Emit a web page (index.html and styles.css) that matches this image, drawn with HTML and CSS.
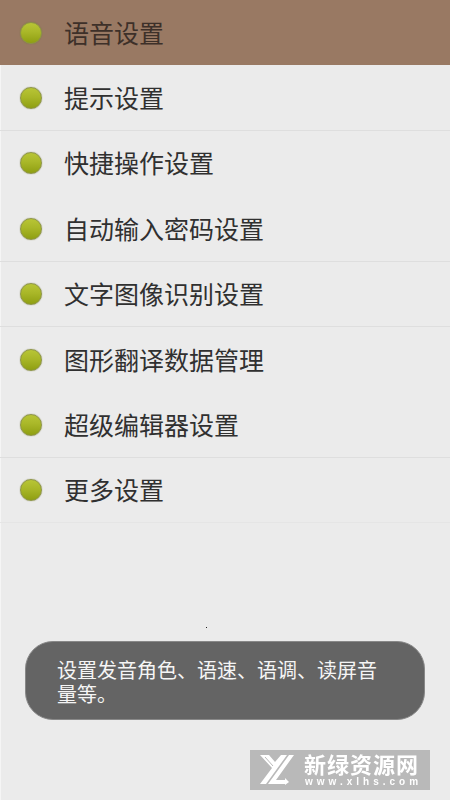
FILE: index.html
```html
<!DOCTYPE html>
<html lang="zh-CN">
<head>
<meta charset="utf-8">
<meta name="viewport" content="width=device-width, initial-scale=1">
<title>设置</title>
<link rel="stylesheet" href="styles.css">
</head>
<body>
<main class="screen">
  <ul class="menu">
    <li class="menu-row selected"><button type="button" class="item"><span class="dot"></span>语音设置</button></li>
    <li class="menu-row ruled"><button type="button" class="item"><span class="dot"></span>提示设置</button></li>
    <li class="menu-row"><button type="button" class="item"><span class="dot"></span>快捷操作设置</button></li>
    <li class="menu-row ruled"><button type="button" class="item"><span class="dot"></span>自动输入密码设置</button></li>
    <li class="menu-row ruled"><button type="button" class="item"><span class="dot"></span>文字图像识别设置</button></li>
    <li class="menu-row"><button type="button" class="item"><span class="dot"></span>图形翻译数据管理</button></li>
    <li class="menu-row ruled"><button type="button" class="item"><span class="dot"></span>超级编辑器设置</button></li>
    <li class="menu-row ruled faint"><button type="button" class="item"><span class="dot"></span>更多设置</button></li>
  </ul>
</main>
<span class="speck"></span>
<div class="toast" role="status">设置发音角色、语速、语调、读屏音量等。</div>
<div class="brand">
  <svg class="logo" viewBox="0 0 36 32" aria-hidden="true">
    <path fill="#fff" d="M0 1H9L15 8L21 1H27L6 30H0L12 14Z"/>
    <path fill="#fff" d="M29 1H34L16 26H25V24L29 28L25 31V30H8Z"/>
    <path fill="none" stroke="#b9b9b9" d="M5 3L13 12"/>
  </svg>
  <div class="brand-text">
    <span class="brand-name">新绿资源网</span>
    <span class="brand-url">www.xlhs.com</span>
  </div>
</div>
</body>
</html>
```
FILE: styles.css
```css
* {
  box-sizing: border-box;
}

body {
  margin: 0;
  min-height: 100vh;
  background: #ebebeb;
  color: #303030;
  font-family: "Noto Sans CJK SC", sans-serif;
}

.screen {
  min-height: 100vh;
  background: linear-gradient(90deg, #f5f5f5 1px, transparent 1px);
}

.menu {
  display: grid;
  grid-auto-rows: 1fr;
  min-height: 523px;
  margin: 0;
  padding: 0;
  list-style: none;
}

.menu-row {
  display: flex;
  border-bottom: 1px solid transparent;
}

.ruled {
  border-bottom-color: #dedede;
}

.faint {
  border-bottom-color: #e5e5e5;
}

.item {
  display: flex;
  align-items: center;
  gap: 22px;
  width: 100%;
  padding: 0 20px 1px;
  border: 0;
  background: none;
  color: inherit;
  font: inherit;
  font-size: 25px;
  line-height: 36px;
  text-align: left;
}

.selected {
  background: #997963;
  color: #3d3029;
}

.dot {
  flex: none;
  width: 22px;
  height: 22px;
  margin-top: 2px;
  border: 1px solid #8d9544;
  border-radius: 50%;
  background: linear-gradient(#b8c536, #a9b728 45%, #8f9f12);
  box-shadow: 0 0 1px #77773f;
}

.speck {
  position: fixed;
  left: 206px;
  bottom: 172px;
  width: 1px;
  height: 1px;
  background: #222;
}

.toast {
  position: fixed;
  right: 25px;
  bottom: 80px;
  left: 25px;
  padding: 16px 31px 13px;
  border: 1px solid #888;
  border-radius: 28px;
  background: #646464;
  color: #f5f5f5;
  font-size: 20px;
  line-height: 24px;
}

.brand {
  position: fixed;
  right: 20px;
  bottom: 10px;
  display: flex;
  align-items: center;
  gap: 8px;
  width: 180px;
  padding: 1px 10px;
  background: #b9b9b9;
  color: #fff;
}

.logo {
  flex: none;
  width: 36px;
  height: 32px;
}

.brand-text {
  display: flex;
  flex-direction: column;
  white-space: nowrap;
}

.brand-name {
  font-size: 22px;
  font-weight: 700;
  line-height: 24px;
  letter-spacing: 1px;
}

.brand-url {
  padding-left: 1px;
  font-family: "Liberation Sans", sans-serif;
  font-size: 10px;
  font-weight: 700;
  line-height: 14px;
  letter-spacing: 4px;
}
```
